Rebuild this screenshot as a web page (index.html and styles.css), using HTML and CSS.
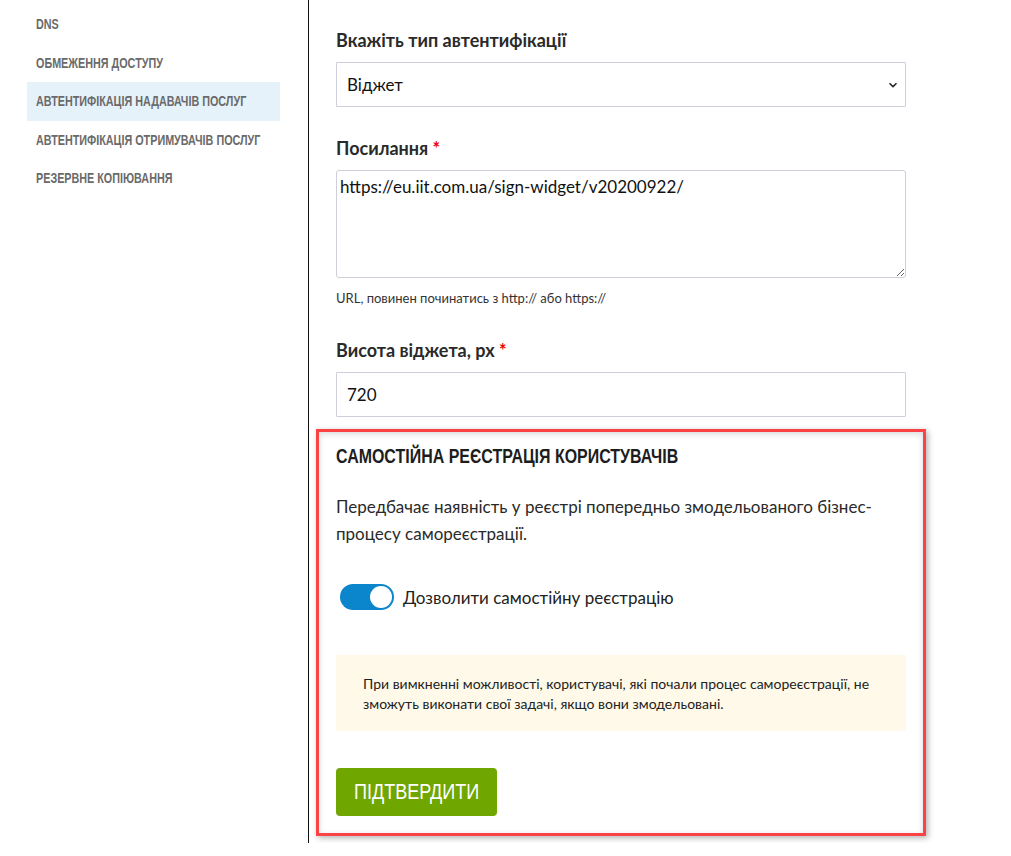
FILE: index.html
```html
<!DOCTYPE html>
<html lang="uk">
<head>
<meta charset="utf-8">
<title>Налаштування</title>
<link rel="stylesheet" href="styles.css">
</head>
<body>
<div class="page">
  <aside class="sidebar">
    <nav class="nav">
      <a class="nav-item"><span class="cond">DNS</span></a>
      <a class="nav-item"><span class="cond">Обмеження доступу</span></a>
      <a class="nav-item active"><span class="cond">Автентифікація надавачів послуг</span></a>
      <a class="nav-item"><span class="cond">Автентифікація отримувачів послуг</span></a>
      <a class="nav-item"><span class="cond">Резервне копіювання</span></a>
    </nav>
  </aside>
  <main class="main">
    <div class="field field-type">
      <label class="label">Вкажіть тип автентифікації</label>
      <div class="select-wrap">
        <select class="control select"><option>Віджет</option></select>
        <svg class="chevron" width="10" height="6" viewBox="0 0 10 6"><path d="M1.5 1.2 L5 4.6 L8.5 1.2" fill="none" stroke="#222" stroke-width="1.5"/></svg>
      </div>
    </div>
    <div class="field field-url">
      <label class="label">Посилання <span class="req">*</span></label>
      <textarea class="control textarea">https://eu.iit.com.ua/sign-widget/v20200922/</textarea>
      <div class="help">URL, повинен починатись з http:// або https://</div>
    </div>
    <div class="field field-height">
      <label class="label">Висота віджета, px <span class="req">*</span></label>
      <input class="control input" value="720">
    </div>
    <section class="card">
      <h2 class="card-title"><span class="cond title-text">Самостійна реєстрація користувачів</span></h2>
      <p class="card-text">Передбачає наявність у реєстрі попередньо змодельованого бізнес-процесу самореєстрації.</p>
      <div class="switch-row">
        <span class="switch"><span class="knob"></span></span>
        <span class="switch-label">Дозволити самостійну реєстрацію</span>
      </div>
      <div class="warning">При вимкненні можливості, користувачі, які почали процес самореєстрації, не<br>зможуть виконати свої задачі, якщо вони змодельовані.</div>
      <button class="btn"><span class="cond btn-text">Підтвердити</span></button>
    </section>
  </main>
</div>
</body>
</html>
```

FILE: styles.css
```css
html, body {
  margin: 0;
  padding: 0;
  background: #fff;
}
body {
  font-family: "Lato", "Noto Sans", sans-serif;
  color: #222;
}
.page {
  display: flex;
  align-items: flex-start;
}
.sidebar {
  width: 308px;
  height: 843px;
  border-right: 1px solid #111;
  flex-shrink: 0;
}
.nav {
  display: flex;
  flex-direction: column;
  padding: 5px 0 0 27px;
  width: 253px;
}
.nav-item {
  display: block;
  height: 38.5px;
  line-height: 38.5px;
  padding-left: 9px;
  font-family: "Liberation Sans", Arial, sans-serif;
  font-weight: 700;
  font-size: 14px;
  text-transform: uppercase;
  color: #6a6a6a;
  white-space: nowrap;
}
.cond {
  display: inline-block;
  white-space: nowrap;
  transform-origin: left center;
  transform: scaleX(0.77);
}
.nav-item.active {
  background: #e6f2fa;
}
.main {
  padding: 28px 0 0 27px;
  width: 570px;
  display: flex;
  flex-direction: column;
}
.field {
  display: flex;
  flex-direction: column;
}
.field-type {
  margin-bottom: 29px;
}
.field-url {
  margin-bottom: 31px;
}
.field-height {
  margin-bottom: 12px;
}
.label {
  font-size: 18px;
  font-weight: 700;
  line-height: 24px;
  margin-bottom: 10px;
  color: #2a2a2a;
}
.req {
  color: #e00;
}
.control {
  box-sizing: border-box;
  width: 570px;
  border: 1px solid #cfcfdc;
  border-radius: 1px;
  font-family: "Lato", "Noto Sans", sans-serif;
  font-size: 17px;
  color: #111;
  background: #fff;
  margin: 0;
}
.select-wrap {
  position: relative;
  width: 570px;
}
.select {
  display: block;
  height: 45px;
  padding: 0 10px;
  appearance: none;
  -webkit-appearance: none;
}
.chevron {
  position: absolute;
  right: 8px;
  top: 20px;
}
.input {
  height: 45px;
  padding: 0 10px;
}
.textarea {
  height: 108px;
  padding: 5px 3px;
  line-height: 22px;
  border-radius: 3px;
  resize: vertical;
}
.help {
  font-size: 13px;
  line-height: 18px;
  margin-top: 11px;
  color: #333;
}
.card {
  margin-left: -20px;
  width: 610px;
  box-sizing: border-box;
  border: 3px solid #fb4346;
  padding: 10px 17px 17px;
  box-shadow: 2px 2px 6px rgba(0,0,0,0.3), inset 0 2px 6px rgba(0,0,0,0.15);
  display: flex;
  flex-direction: column;
  align-items: flex-start;
}
.card-title {
  margin: 0;
  font-family: "Liberation Sans", Arial, sans-serif;
  font-size: 21px;
  font-weight: 700;
  line-height: 28px;
  text-transform: uppercase;
  color: #1d1d1d;
  white-space: nowrap;
}
.title-text {
  transform: scaleX(0.76);
}
.card-text {
  margin: 23px 0 0;
  font-size: 17px;
  line-height: 27px;
  color: #2a2a2a;
}
.switch-row {
  display: flex;
  align-items: center;
  margin-top: 37px;
  padding-left: 4px;
  height: 26px;
}
.switch {
  width: 54px;
  height: 26px;
  border-radius: 13px;
  background: #0b86cc;
  display: flex;
  align-items: center;
  justify-content: flex-end;
  padding-right: 2px;
  box-sizing: border-box;
}
.knob {
  width: 22px;
  height: 22px;
  border-radius: 50%;
  background: #fff;
}
.switch-label {
  margin-left: 9px;
  font-size: 17px;
  color: #222;
}
.warning {
  margin-top: 45px;
  width: 570px;
  box-sizing: border-box;
  background: #fef9e8;
  padding: 19px 27px 17px;
  font-size: 14px;
  line-height: 20px;
  color: #222;
}
.btn {
  margin-top: 37px;
  height: 48px;
  width: 161px;
  border: 0;
  border-radius: 4px;
  background: #70a600;
  color: #fff;
  font-family: "Liberation Sans", Arial, sans-serif;
  font-size: 22px;
  text-transform: uppercase;
  cursor: pointer;
  padding: 0 0 0 18px;
  text-align: left;
}
.btn-text {
  transform: scaleX(0.82);
}
```
